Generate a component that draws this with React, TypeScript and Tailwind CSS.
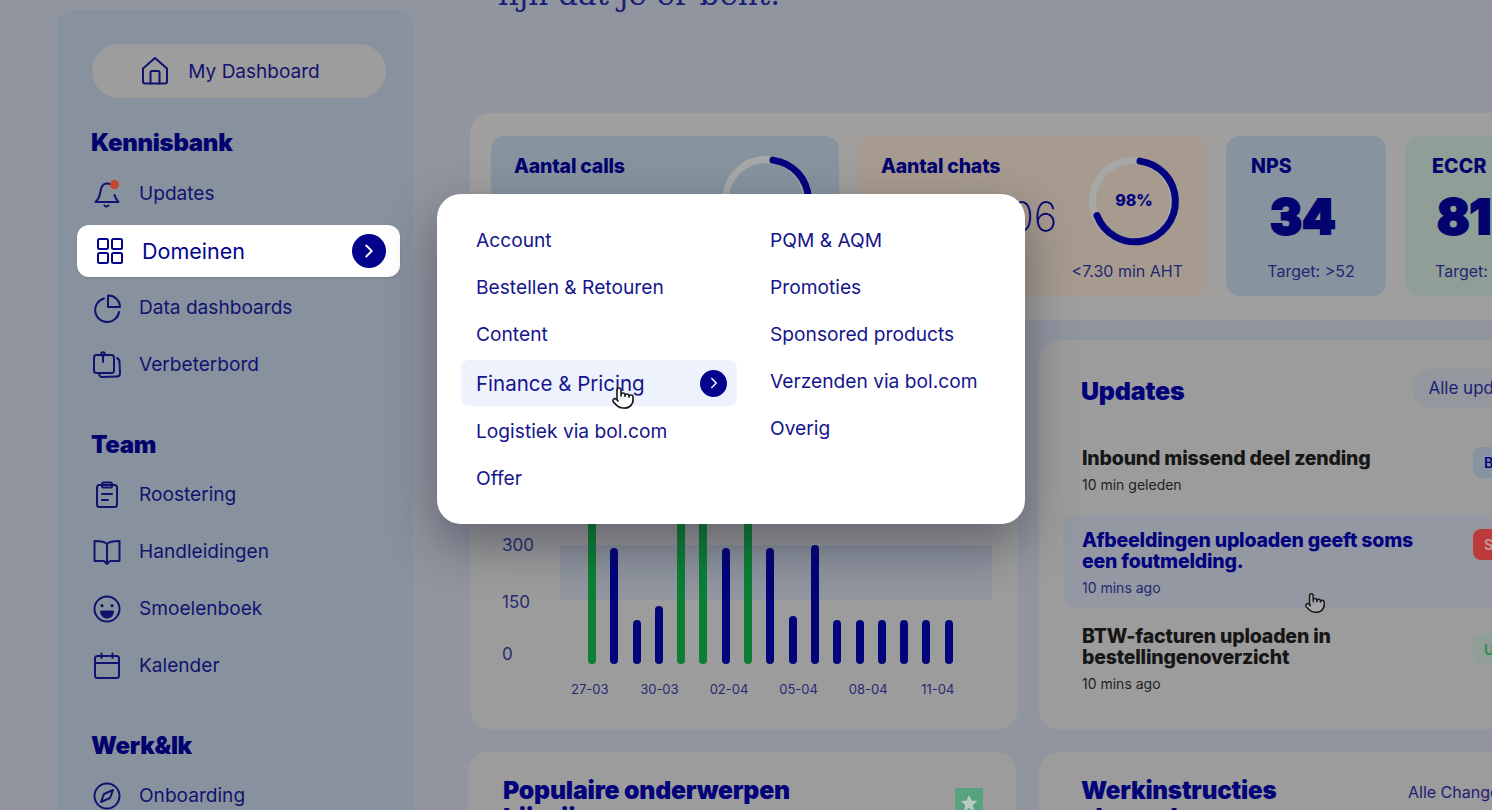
import { ChevronRight, Pointer } from "lucide-react";
import type { ReactNode } from "react";

const font = "font-['Inter','Liberation_Sans',sans-serif]";

const Icon = ({ children }: { children: ReactNode }) => (
  <svg
    width="30"
    height="30"
    viewBox="0 0 30 30"
    fill="none"
    stroke="currentColor"
    strokeWidth="2"
    strokeLinecap="round"
    strokeLinejoin="round"
    className="shrink-0"
  >
    {children}
  </svg>
);

const icons = {
  home: (
    <>
      <path d="M3 12.500 15 2l12 10.500V25.500a2 2 0 0 1-2 2H5a2 2 0 0 1-2-2Z" />
      <path d="M10.500 27.500V16.500a1.500 1.500 0 0 1 1.500-1.500h6a1.500 1.500 0 0 1 1.500 1.500V27.500" />
    </>
  ),
  bell: (
    <>
      <path d="M19 5.500C17.500 4.600 16 4.300 14.500 4.500 10.500 5 9 8.500 8.500 12c-.5 4-1.500 8-5 11h23c-2.200-2-3.300-4.300-4-7" />
      <path d="M12.500 26.500c.8 1.300 3.200 1.300 4 0" />
    </>
  ),
  grid: (
    <>
      <rect x="3" y="3" width="10" height="10" rx="1.500" />
      <rect x="17" y="3" width="10" height="10" rx="1.500" />
      <rect x="3" y="17" width="10" height="10" rx="1.500" />
      <rect x="17" y="17" width="10" height="10" rx="1.500" />
    </>
  ),
  pie: (
    <>
      <path d="M12 5.500A12 12 0 1 0 27 19" />
      <path d="M16 2.500A11.500 11.500 0 0 1 28 14H16Z" />
    </>
  ),
  board: (
    <>
      <rect x="2" y="5" width="20" height="18" rx="2.500" />
      <path d="M11 5V12" />
      <circle cx="11" cy="4" r="1.800" />
      <path d="M25 8c2 1 2.500 2 2.500 4l.5 11c0 2-1 3.500-3 3.500L10 27c-1.500 0-2.500-1-3-3" />
    </>
  ),
  clipboard: (
    <>
      <rect x="5" y="5" width="20" height="22" rx="2.500" />
      <rect x="10" y="2.500" width="10" height="5" rx="1.500" />
      <path d="M10 14h10M10 20h6" />
    </>
  ),
  book: (
    <>
      <path d="M15 7C13 4.500 10 4 2.500 4v20H12l3 3 3-3h9.500V4C20 4 17 4.500 15 7Z" />
      <path d="M15 7v19" />
    </>
  ),
  smile: (
    <>
      <circle cx="15" cy="15" r="12.500" />
      <path d="M10 11.500v.2M20 11.500v.2" strokeWidth="3" />
      <path d="M9 17.500h12a6 6 0 0 1-12 0Z" fill="currentColor" />
    </>
  ),
  calendar: (
    <>
      <rect x="3" y="5" width="24" height="22" rx="2.500" />
      <path d="M3 12h24M9.500 2.500V7M20.500 2.500V7" />
    </>
  ),
  compass: (
    <>
      <circle cx="15" cy="15" r="12.500" />
      <path d="M21 9l-3 8-9 4 3-8Z" />
    </>
  ),
};

const NavItem = ({ icon, label, dot }: { icon: ReactNode; label: string; dot?: boolean }) => (
  <div className="flex h-[57px] items-center gap-[17px] pl-[1px] text-[#12126f]">
    <div className="relative flex">
      <Icon>{icon}</Icon>
      {dot && <span className="absolute right-[3px] top-[1px] h-[9px] w-[9px] rounded-full bg-[#c2452f]" />}
    </div>
    <span className="text-[19.100px]">{label}</span>
  </div>
);

const SectionTitle = ({ children }: { children: ReactNode }) => (
  <h3 className="text-[24px] font-black leading-[30px] tracking-[-0.3px] text-[#03036f]">{children}</h3>
);

const Sidebar = () => (
  <aside className="h-[900px] w-[356px] shrink-0 rounded-[16px] bg-[#87929e] pl-[34px] pr-[27px] pt-[34px]">
    <div className="ml-[1px] flex h-[54px] w-[294px] items-center justify-center gap-[18px] rounded-full bg-[#9d9d9d] pr-[18px] text-[#12126f]">
      <Icon>{icons.home}</Icon>
      <span className="pt-[3px] text-[19px]">My Dashboard</span>
    </div>

    <div className="mt-[30px]">
      <SectionTitle>Kennisbank</SectionTitle>
    </div>
    <div className="mt-[7px] flex flex-col">
      <NavItem icon={icons.bell} label="Updates" dot />
      <div className="-mx-[14px] mt-[3px] flex h-[52px] items-center gap-[17px] rounded-[12px] bg-white pl-[18px] pr-[14px] text-[#03038c] shadow-sm">
        <Icon>{icons.grid}</Icon>
        <span className="text-[21.500px]">Domeinen</span>
        <span className="ml-auto flex h-[34px] w-[34px] items-center justify-center rounded-full bg-[#03038c] text-white">
          <ChevronRight size={22} strokeWidth={2} />
        </span>
      </div>
      <div className="mt-[2px]">
        <NavItem icon={icons.pie} label="Data dashboards" />
      </div>
      <NavItem icon={icons.board} label="Verbeterbord" />
    </div>

    <div className="mt-[37px]">
      <SectionTitle>Team</SectionTitle>
    </div>
    <div className="mt-[6px] flex flex-col">
      <NavItem icon={icons.clipboard} label="Roostering" />
      <NavItem icon={icons.book} label="Handleidingen" />
      <NavItem icon={icons.smile} label="Smoelenboek" />
      <NavItem icon={icons.calendar} label="Kalender" />
    </div>

    <div className="mt-[37px]">
      <SectionTitle>Werk&amp;Ik</SectionTitle>
    </div>
    <div className="mt-[6px]">
      <NavItem icon={icons.compass} label="Onboarding" />
    </div>
  </aside>
);

const Donut = ({ label }: { label?: string }) => (
  <svg width="96" height="96" viewBox="0 0 96 96" className="shrink-0">
    <circle cx="47" cy="48" r="40.500" fill="none" stroke="#a6a8a8" strokeWidth="7" />
    <path
      d="M54 8.100a40.500 40.500 0 1 1-43 54.500"
      fill="none"
      stroke="#03037f"
      strokeWidth="7"
      strokeLinecap="round"
    />
    {label && (
      <text x="48" y="53" textAnchor="middle" fontSize="16" fontWeight="800" fill="#03037f">
        {label}
      </text>
    )}
  </svg>
);

const StatCards = () => (
  <div className="flex h-[207px] w-[1100px] shrink-0 items-start gap-[19px] rounded-[20px] bg-[#a09f9d] pl-[21px] pt-[23px]">
    <div className="relative h-[160px] w-[348px] shrink-0 rounded-[14px] bg-[#87939f] pl-[23px] pt-[17px] text-[#03036f]">
      <div className="text-[19.500px] font-extrabold leading-[26px] tracking-[-0.2px]">Aantal calls</div>
      <div className="absolute right-[24px] top-[16px]">
        <Donut />
      </div>
    </div>

    <div className="relative h-[160px] w-[348px] shrink-0 rounded-[14px] bg-[#a79b90] pl-[23px] pt-[17px] text-[#03036f]">
      <div className="text-[19.500px] font-extrabold leading-[26px] tracking-[-0.2px]">Aantal chats</div>
      <div className="absolute right-[149px] top-[57px] text-[40px] font-extralight leading-[48px]">1.106</div>
      <div className="absolute right-[24px] top-[17px]">
        <Donut label="98%" />
      </div>
      <div className="absolute right-[23px] top-[124px] text-[16px] leading-[22px] text-[#22276f]">&lt;7.30 min AHT</div>
    </div>

    <div className="ml-[1px] h-[160px] w-[160px] shrink-0 rounded-[14px] bg-[#87939f] pl-[25px] pt-[17px] text-[#03036f]">
      <div className="text-[19.500px] font-extrabold leading-[26px]">NPS</div>
      <div className="ml-[19px] mt-[11px] text-[48px] font-black leading-[54px] [-webkit-text-stroke:2px_#03036f]">34</div>
      <div className="-ml-[15px] mt-[16px] text-center text-[16px] leading-[22px] text-[#22276f]">Target: &gt;52</div>
    </div>

    <div className="h-[160px] w-[160px] shrink-0 rounded-[14px] bg-[#8f9e97] pl-[27px] pt-[17px] text-[#03036f]">
      <div className="text-[19.500px] font-extrabold leading-[26px] tracking-[0.2px]">ECCR</div>
      <div className="ml-[5px] mt-[11px] text-[48px] font-black leading-[54px] [-webkit-text-stroke:2px_#03036f]">81</div>
      <div className="mt-[16px] pl-[3px] text-[16px] leading-[22px] text-[#22276f]">Target: &gt;80</div>
    </div>
  </div>
);

const bars = [
  { h: 240, green: true },
  { h: 116 },
  { h: 44 },
  { h: 58 },
  { h: 240, green: true },
  { h: 240, green: true },
  { h: 116 },
  { h: 240, green: true },
  { h: 116 },
  { h: 48 },
  { h: 119 },
  { h: 44 },
  { h: 44 },
  { h: 44 },
  { h: 44 },
  { h: 44 },
  { h: 44 },
];

const dates = ["27-03", "30-03", "02-04", "05-04", "08-04", "11-04"];

const ChartCard = () => (
  <div className="h-[389px] w-[548px] shrink-0 rounded-[20px] bg-[#9c9c9c] pl-[32px] pt-[60px]">
    <div className="relative flex h-[264px] items-end">
      <div className="absolute left-[58px] top-[145px] h-[55px] w-[432px] bg-gradient-to-b from-[#8c929c] to-[#9297a1]" />
      <div className="-mb-[2px] flex w-[86px] flex-col text-[17px] leading-[24px] text-[#262a72]">
        <span>300</span>
        <span className="mt-[33px]">150</span>
        <span className="mt-[28px]">0</span>
      </div>
      <div className="relative flex items-end gap-[14.300px]">
        {bars.map((bar, i) => (
          <div
            key={i}
            className={`w-2 rounded-full ${bar.green ? "bg-[#0b8034]" : "bg-[#03037a]"}`}
            style={{ height: bar.h }}
          />
        ))}
      </div>
    </div>
    <div className="ml-[53px] mt-[14px] flex text-[13px] leading-[22px] text-[#262a72]">
      {dates.map((date) => (
        <span key={date} className="w-[69.600px] text-center">
          {date}
        </span>
      ))}
    </div>
  </div>
);

const UpdateRow = ({
  title,
  time,
  badge,
  badgeClass,
  active,
}: {
  title: ReactNode;
  time: string;
  badge: string;
  badgeClass: string;
  active?: boolean;
}) => (
  <div className={`relative rounded-[12px] px-[19px] ${active ? "text-[#03037f]" : "text-[#161616]"}`}>
    <div className="text-[19.500px] font-extrabold leading-[21px] tracking-[-0.2px]">{title}</div>
    <div className={`mt-[6px] text-[14px] leading-[20px] ${active ? "text-[#22276f]" : "text-[#1f1f1f]"}`}>{time}</div>
    <div className={`absolute left-[410px] flex h-[31px] w-[60px] items-center rounded-[8px] pl-[11px] text-[14px] font-semibold ${badgeClass}`}>
      {badge}
    </div>
  </div>
);

const UpdatesCard = () => (
  <div className="h-[389px] w-[560px] shrink-0 rounded-[20px] bg-[#9c9c9c] pl-[24px] pt-[29px]">
    <div className="flex items-start pl-[18px]">
      <h2 className="text-[25px] font-black leading-[44px] tracking-[-0.2px] text-[#03037a]">Updates</h2>
      <div className="ml-[228px] flex h-[39px] w-[160px] items-center rounded-full bg-[#93989f] pl-[16px] text-[17px] text-[#1c2075]">
        Alle updates
      </div>
    </div>
    <div className="mt-[35px] flex flex-col">
      <div className="h-[67px]">
        <UpdateRow
          title="Inbound missend deel zending"
          time="10 min geleden"
          badge="B"
          badgeClass="top-[-1px] bg-[#87939f] text-[#03037f]"
        />
      </div>
      <div className="h-[93px] rounded-[12px] bg-[#9398a3] pt-[15px]">
        <UpdateRow
          active
          title={
            <>
              Afbeeldingen uploaden geeft soms
              <br />
              een foutmelding.
            </>
          }
          time="10 mins ago"
          badge="S"
          badgeClass="top-[-1px] bg-[#bd3a3a] text-[#c9a0a0]"
        />
      </div>
      <div className="pt-[18px]">
        <UpdateRow
          title={
            <>
              BTW-facturen uploaden in
              <br />
              bestellingenoverzicht
            </>
          }
          time="10 mins ago"
          badge="U"
          badgeClass="top-[8px] bg-[#8f9e97] text-[#2f8a4d]"
        />
      </div>
    </div>
  </div>
);

const BottomCards = () => (
  <div className="-ml-[2px] flex gap-[23px]">
    <div className="flex h-[120px] w-[548px] shrink-0 justify-between rounded-[20px] bg-[#9c9c9c] pl-[35px] pr-[33px] pt-[25px]">
      <h2 className="text-[24.800px] font-black leading-[27px] tracking-[-0.2px] text-[#03037a]">
        Populaire onderwerpen
        <br />
        bij mij
      </h2>
      <div className="mt-[11px] flex h-[40px] w-[28px] justify-center bg-[#58a181] pt-[5px] text-[#b9c9c0]">
        <svg width="20" height="20" viewBox="0 0 24 24" fill="currentColor">
          <path d="M12 2l3 7 7 .6-5.400 4.700L18.200 22 12 18l-6.200 4 1.600-7.700L2 9.600 9 9Z" />
        </svg>
      </div>
    </div>
    <div className="flex h-[120px] w-[560px] shrink-0 rounded-[20px] bg-[#9c9c9c] pl-[42px] pt-[25px]">
      <h2 className="w-[327px] text-[24.200px] font-black leading-[27px] tracking-[-0.2px] text-[#03037a]">
        Werkinstructies
        <br />
        changelog
      </h2>
      <span className="pt-[4px] text-[16px] leading-[22px] text-[#1c2075]">Alle Changes</span>
    </div>
  </div>
);

const menuLeft = ["Account", "Bestellen & Retouren", "Content", "Finance & Pricing", "Logistiek via bol.com", "Offer"];
const menuRight = ["PQM & AQM", "Promoties", "Sponsored products", "Verzenden via bol.com", "Overig"];

const DomainMenu = () => (
  <div className="absolute left-[437px] top-[194px] flex h-[330px] w-[588px] rounded-[24px] bg-white pl-[24px] pt-[23px] text-[19.200px] leading-[47px] text-[#15158c] shadow-[0_20px_50px_rgba(20,24,40,0.42)]">
    <div className="w-[276px] shrink-0">
      {menuLeft.map((item) =>
        item === "Finance & Pricing" ? (
          <div key={item} className="mb-[2px] mt-[2px] flex h-[46px] items-center justify-between rounded-[8px] bg-[#eef2fc] pl-[15px] pr-[10px] text-[20.500px]">
            <span>{item}</span>
            <span className="flex h-[27px] w-[27px] items-center justify-center rounded-full bg-[#03038c] text-white">
              <ChevronRight size={18} strokeWidth={2} />
            </span>
          </div>
        ) : (
          <div key={item} className="pl-[15px]">
            {item}
          </div>
        )
      )}
    </div>
    <div className="pl-[33px]">
      {menuRight.map((item) => (
        <div key={item}>{item}</div>
      ))}
    </div>
  </div>
);

export default function App() {
  return (
    <div className={`relative flex h-[810px] w-[1492px] gap-[57px] overflow-hidden bg-[#90959f] pl-[57px] pt-[10px] ${font}`}>
      <Sidebar />

      <main className="-mt-[38px] flex w-[1100px] shrink-0 flex-col">
        <div className="h-[141px] shrink-0 pl-[28px] font-['DejaVu_Serif',serif] text-[31px] leading-[44px] text-[#1a1f75]">
          fijn dat je er bent.
        </div>
        <StatCards />
        <div className="mt-[20px] flex shrink-0 gap-[21px]">
          <ChartCard />
          <UpdatesCard />
        </div>
        <div className="mt-[23px] shrink-0">
          <BottomCards />
        </div>
      </main>

      <DomainMenu />

      {/* cursors */}
      <Pointer size={24} strokeWidth={1.6} className="absolute left-[611px] top-[386px] fill-white text-[#1a1a1a]" />
      <Pointer size={22} strokeWidth={1.6} className="absolute left-[1304px] top-[592px] fill-[#a8a8a8] text-[#1a1a1a]" />
    </div>
  );
}
